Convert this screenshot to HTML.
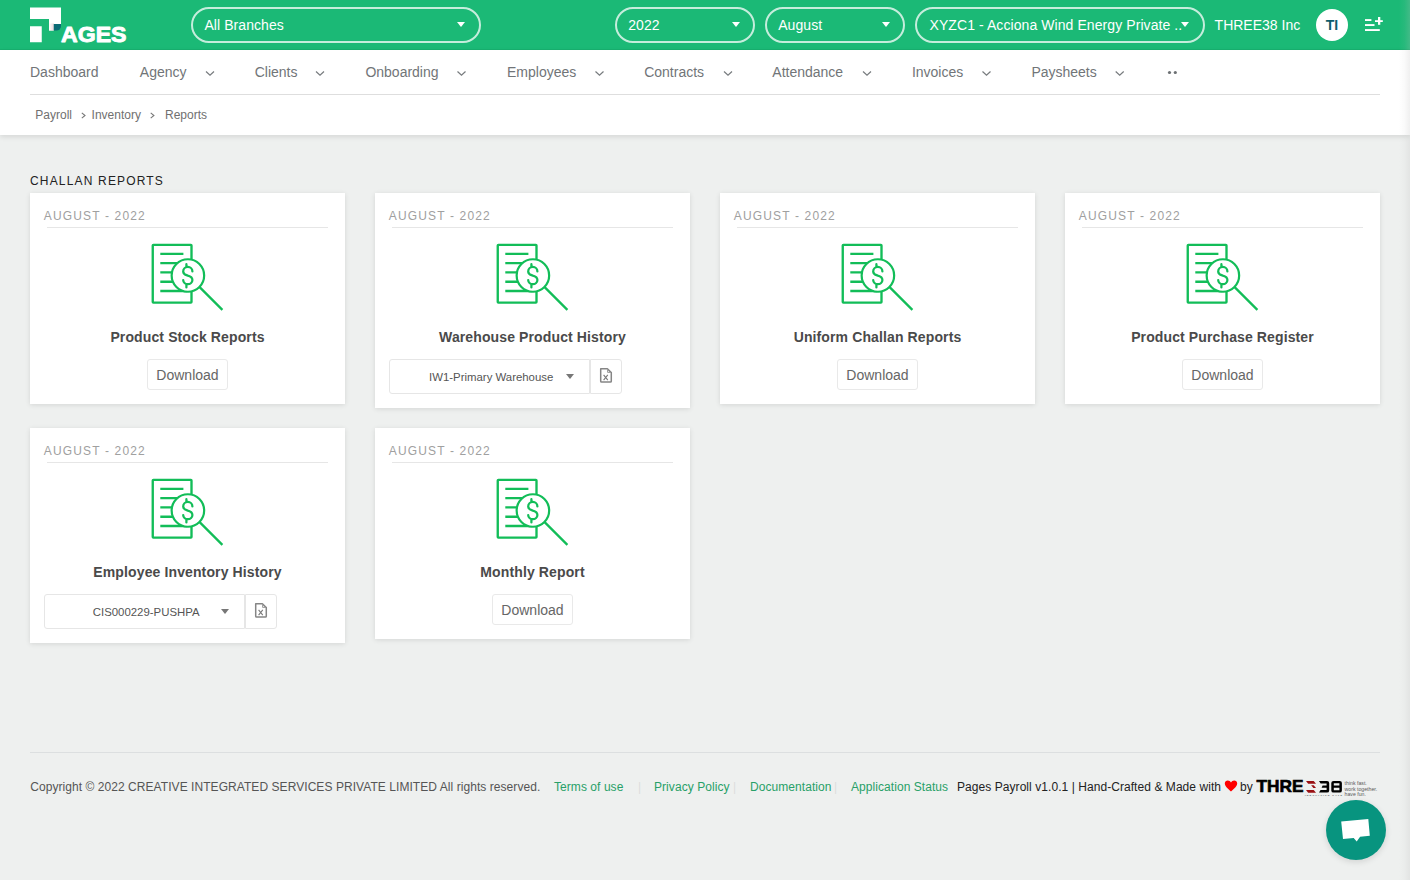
<!DOCTYPE html>
<html><head><meta charset="utf-8">
<style>
*{box-sizing:border-box;margin:0;padding:0}
html,body{width:1410px;height:880px;overflow:hidden}
body{background:#eef0ef;font-family:"Liberation Sans",sans-serif;position:relative}
.abs{position:absolute;white-space:nowrap}
#hdr{position:absolute;left:0;top:0;width:1410px;height:50px;background:#1bb976;border-bottom:1px solid #18b06f}
.pill{position:absolute;top:7.3px;height:35.4px;border:2px solid rgba(255,255,255,.75);border-radius:18px}
.pill span{position:absolute;left:11.2px;top:9px;font-size:14px;line-height:14px;color:#fff;white-space:nowrap;letter-spacing:.08px}
.caret{position:absolute;width:0;height:0;border-left:4px solid transparent;border-right:4px solid transparent;border-top:5px solid #fff}
#panel{position:absolute;left:0;top:50px;width:1410px;height:85px;background:#fff;box-shadow:0 2px 5px rgba(0,0,0,.1)}
.nav{position:absolute;top:65.15px;font-size:14px;line-height:14px;color:#717578;white-space:nowrap}
.chev{position:absolute;top:70px}
.bc{position:absolute;top:109.4px;font-size:12px;line-height:12px;color:#707070;white-space:nowrap}
.card{position:absolute;width:315px;background:#fff;box-shadow:0 1px 5px rgba(0,0,0,.11)}
.card .date{position:absolute;left:13.8px;top:17px;font-size:12px;line-height:12px;letter-spacing:1.15px;color:#a0a0a0;white-space:nowrap}
.card .div{position:absolute;left:17px;right:17px;top:34.3px;height:1px;background:#e6e6e6}
.card .ico{position:absolute;left:120px;top:48px;width:80px;height:70px}
.card .ttl{position:absolute;left:0;width:315px;text-align:center;top:136.9px;font-size:14px;line-height:14px;font-weight:bold;color:#4a4a4a;white-space:nowrap;letter-spacing:.12px}
.btn{position:absolute;top:166px;left:117px;width:81px;height:31px;border:1px solid #e9e9e9;border-radius:3px;background:#fff}
.btn span{position:absolute;left:0;width:79px;text-align:center;top:7.9px;font-size:14px;line-height:14px;color:#666}
.sel{position:absolute;top:166.1px;left:14.2px;width:200.6px;height:34.9px;border:1px solid #e6e6e6;border-radius:3px 0 0 3px}
.sel span{position:absolute;left:2px;width:198px;text-align:center;top:12px;font-size:11.4px;line-height:11.4px;color:#555;white-space:nowrap}
.sel .caret{border-top-color:#777;left:176px;top:14px}
.xl{position:absolute;top:166.1px;left:215px;width:31.7px;height:34.9px;border:1px solid #e6e6e6;border-radius:0 3px 3px 0}
.foot{position:absolute;top:780.84px;font-size:12px;line-height:12px;white-space:nowrap;letter-spacing:.06px}
</style></head>
<body>
<div id="hdr">
  <svg class="abs" style="left:0;top:0" width="140" height="50" viewBox="0 0 140 50">
    <path d="M30 7.5H61V24H53.75V30.5H49V19H30Z" fill="#fff"/>
    <linearGradient id="fg" x1="0" y1="0" x2="1" y2="0"><stop offset="0" stop-color="#fff"/><stop offset="1" stop-color="#e9d6d9"/></linearGradient>
    <rect x="49" y="23.5" width="5" height="7" fill="url(#fg)"/>
    <path d="M53.75 24H61V26A4.5 4.5 0 0 1 56.5 30.5H53.75Z" fill="#0b6a74"/>
    <rect x="30" y="26.25" width="11.75" height="16" fill="#fff"/>
    <text x="61" y="42.1" font-family="Liberation Sans" font-weight="bold" font-size="21.6" fill="#fff" stroke="#fff" stroke-width="0.9" stroke-linejoin="round" textLength="65.5" lengthAdjust="spacingAndGlyphs">AGES</text>
  </svg>
  <div class="pill" style="left:191.2px;width:290.3px"><span>All Branches</span><div class="caret" style="left:264px;top:13px"></div></div>
  <div class="pill" style="left:615px;width:140px"><span>2022</span><div class="caret" style="left:114.5px;top:13px"></div></div>
  <div class="pill" style="left:765px;width:140px"><span>August</span><div class="caret" style="left:114.5px;top:13px"></div></div>
  <div class="pill" style="left:915px;width:290px"><span style="left:12.5px">XYZC1 - Acciona Wind Energy Private ..</span><div class="caret" style="left:263.5px;top:13px"></div></div>
  <div class="abs" style="left:1214.6px;top:18.15px;font-size:14px;line-height:14px;color:#fff">THREE38 Inc</div>
  <div class="abs" style="left:1316px;top:9px;width:32px;height:32px;border-radius:50%;background:#fff"></div>
  <div class="abs" style="left:1316px;top:18.15px;width:32px;text-align:center;font-size:14px;line-height:14px;font-weight:bold;color:#0e5c6c">TI</div>
  <svg class="abs" style="left:1360px;top:14px" width="26" height="20" viewBox="1360 14 26 20">
    <rect x="1365" y="19.1" width="6.4" height="1.9" fill="#fff"/>
    <rect x="1365" y="24.1" width="9.5" height="1.9" fill="#fff"/>
    <rect x="1365" y="29.1" width="14.8" height="1.9" fill="#fff"/>
    <rect x="1375" y="20.2" width="7.8" height="1.8" fill="#fff"/>
    <rect x="1378" y="17" width="2.3" height="7.8" fill="#fff"/>
  </svg>
</div>

<div id="panel"></div>
<div class="nav" style="left:30px">Dashboard</div>
<div class="nav" style="left:139.8px">Agency</div>
<div class="nav" style="left:254.7px">Clients</div>
<div class="nav" style="left:365.4px">Onboarding</div>
<div class="nav" style="left:507px">Employees</div>
<div class="nav" style="left:644.2px">Contracts</div>
<div class="nav" style="left:772.3px">Attendance</div>
<div class="nav" style="left:911.9px">Invoices</div>
<div class="nav" style="left:1031.4px">Paysheets</div>
<svg class="abs" style="left:0;top:60px" width="1410" height="24" viewBox="0 60 1410 24">
  <g fill="none" stroke="#777b7e" stroke-width="1.2">
    <path d="M206 71.5L210 75.2L214 71.5"/>
    <path d="M316 71.5L320 75.2L324 71.5"/>
    <path d="M457.5 71.5L461.5 75.2L465.5 71.5"/>
    <path d="M595.5 71.5L599.5 75.2L603.5 71.5"/>
    <path d="M724 71.5L728 75.2L732 71.5"/>
    <path d="M863 71.5L867 75.2L871 71.5"/>
    <path d="M982.5 71.5L986.5 75.2L990.5 71.5"/>
    <path d="M1115.7 71.5L1119.7 75.2L1123.7 71.5"/>
  </g>
  <circle cx="1169.5" cy="72.5" r="1.6" fill="#6c7073"/>
  <circle cx="1175.3" cy="72.5" r="1.6" fill="#6c7073"/>
</svg>
<div class="abs" style="left:30px;top:94px;width:1350px;height:1px;background:#dedede"></div>
<div class="bc" style="left:35.3px">Payroll</div>
<div class="bc" style="left:91.6px">Inventory</div>
<div class="bc" style="left:165px">Reports</div>
<svg class="abs" style="left:0;top:105px" width="220" height="20" viewBox="0 105 220 20">
  <g fill="none" stroke="#777" stroke-width="1.1">
    <path d="M81.8 112.9L85 115.5L81.8 118.1"/>
    <path d="M150.7 112.9L153.9 115.5L150.7 118.1"/>
  </g>
</svg>

<div class="abs" style="left:30px;top:174.9px;font-size:12px;line-height:12px;letter-spacing:1.17px;color:#222">CHALLAN REPORTS</div>

<svg width="0" height="0" style="position:absolute">
  <defs>
    <g id="rep">
      <rect x="2.75" y="3.85" width="38.75" height="57.85" rx="0.6" fill="none" stroke="#12bd58" stroke-width="2.35" stroke-linejoin="round"/>
      <path d="M10.3 12.8H33.4M10.3 22.1H37M10.3 31.4H37M10.3 40.7H37M10.3 50H37" stroke="#12bd58" stroke-width="2.35"/>
      <circle cx="37.9" cy="34.5" r="16.25" fill="#fff" stroke="#12bd58" stroke-width="2.2"/>
      <path d="M49.6 46.1L72.4 68.9" stroke="#12bd58" stroke-width="2.3"/>
      <path d="M42.4 30.4A4.6 4.5 0 0 0 33.2 30.4C33.2 33.5 36 34 37.8 34.6C40 35.2 42.4 36.2 42.4 39A4.6 4.2 0 0 1 33.2 39M36.4 23.2V25.9M36.4 43.1V46.4" fill="none" stroke="#12bd58" stroke-width="2.25" stroke-linecap="round"/>
    </g>
    <g id="xls">
      <path d="M10.7 9.7H17.4L21.3 13.6V22.2Q21.3 23.1 20.4 23.1H11.6Q10.7 23.1 10.7 22.2Z" fill="none" stroke="#858585" stroke-width="1.5" stroke-linejoin="round"/>
      <path d="M17.6 10V13.4H21" fill="none" stroke="#9a9a9a" stroke-width="1"/>
      <path d="M13.6 15.9L17.8 21.1M17.8 15.9L13.6 21.1" fill="none" stroke="#7a7a7a" stroke-width="1.1"/>
    </g>
  </defs>
</svg>

<!-- Row 1 -->
<div class="card" style="left:30px;top:193px;height:211px">
  <div class="date">AUGUST - 2022</div><div class="div"></div>
  <svg class="ico" viewBox="0 0 80 70"><use href="#rep" transform="translate(-0 0)"/></svg>
  <div class="ttl">Product Stock Reports</div>
  <div class="btn"><span>Download</span></div>
</div>
<div class="card" style="left:375px;top:193px;height:215px">
  <div class="date">AUGUST - 2022</div><div class="div"></div>
  <svg class="ico" viewBox="0 0 80 70"><use href="#rep"/></svg>
  <div class="ttl">Warehouse Product History</div>
  <div class="sel"><span>IW1-Primary Warehouse</span><div class="caret"></div></div>
  <div class="xl"><svg style="position:absolute;left:-1px;top:-1px" width="31.7" height="34.9" viewBox="0 0 31.7 34.9"><use href="#xls"/></svg></div>
</div>
<div class="card" style="left:720px;top:193px;height:211px">
  <div class="date">AUGUST - 2022</div><div class="div"></div>
  <svg class="ico" viewBox="0 0 80 70"><use href="#rep"/></svg>
  <div class="ttl">Uniform Challan Reports</div>
  <div class="btn"><span>Download</span></div>
</div>
<div class="card" style="left:1065px;top:193px;height:211px">
  <div class="date">AUGUST - 2022</div><div class="div"></div>
  <svg class="ico" viewBox="0 0 80 70"><use href="#rep"/></svg>
  <div class="ttl">Product Purchase Register</div>
  <div class="btn"><span>Download</span></div>
</div>
<!-- Row 2 -->
<div class="card" style="left:30px;top:428px;height:215px">
  <div class="date">AUGUST - 2022</div><div class="div"></div>
  <svg class="ico" viewBox="0 0 80 70"><use href="#rep"/></svg>
  <div class="ttl">Employee Inventory History</div>
  <div class="sel"><span>CIS000229-PUSHPA</span><div class="caret"></div></div>
  <div class="xl"><svg style="position:absolute;left:-1px;top:-1px" width="31.7" height="34.9" viewBox="0 0 31.7 34.9"><use href="#xls"/></svg></div>
</div>
<div class="card" style="left:375px;top:428px;height:211px">
  <div class="date">AUGUST - 2022</div><div class="div"></div>
  <svg class="ico" viewBox="0 0 80 70"><use href="#rep"/></svg>
  <div class="ttl">Monthly Report</div>
  <div class="btn"><span>Download</span></div>
</div>

<!-- Footer -->
<div class="abs" style="left:30px;top:752px;width:1350px;height:1px;background:#dcdfe0"></div>
<div class="foot" style="left:30.2px;color:#555">Copyright © 2022 CREATIVE INTEGRATED SERVICES PRIVATE LIMITED All rights reserved.</div>
<div class="foot" style="left:554px;color:#28a068">Terms of use</div>
<div class="foot" style="left:638px;color:#ddd">|</div>
<div class="foot" style="left:654px;color:#28a068">Privacy Policy</div>
<div class="foot" style="left:733px;color:#ddd">|</div>
<div class="foot" style="left:750px;color:#28a068">Documentation</div>
<div class="foot" style="left:834px;color:#ddd">|</div>
<div class="foot" style="left:851px;color:#28a068">Application Status</div>
<div class="foot" style="left:957px;color:#222">Pages Payroll v1.0.1 | Hand-Crafted &amp; Made with</div>
<svg class="abs" style="left:1224px;top:780px" width="14" height="12" viewBox="0 0 14 12"><path d="M7 11.5C6 10.5 0.8 7 0.8 3.6C0.8 1.8 2.2 0.5 3.8 0.5C5.2 0.5 6.4 1.4 7 2.6C7.6 1.4 8.8 0.5 10.2 0.5C11.8 0.5 13.2 1.8 13.2 3.6C13.2 7 8 10.5 7 11.5Z" fill="#f00"/></svg>
<div class="foot" style="left:1240px;color:#222">by</div>
<svg class="abs" style="left:1250px;top:774px" width="135" height="26" viewBox="1250 774 135 26">
  <text x="1256.5" y="792.3" font-family="Liberation Sans" font-weight="bold" font-size="16.3" fill="#000" stroke="#000" stroke-width="0.6" textLength="47" lengthAdjust="spacingAndGlyphs">THRE</text>
  <g fill="#990f12">
    <path d="M1306 780.9H1313.7L1316 783.7H1308.2Z"/>
    <path d="M1311.1 785.3H1313.7L1316 787.9H1313.4Z"/>
    <path d="M1306 790H1313.7L1316 792.8H1308.2Z"/>
  </g>
  <path d="M1319 780.9H1327Q1329.2 780.9 1329.2 783.1V790.4Q1329.2 792.6 1327 792.6H1319L1320.6 790.1H1326.6V787.8H1321.6L1322.6 785.6H1326.6V783.4H1320.6Z" fill="#000"/>
  <path d="M1333.5 780.9H1339.7Q1341.9 780.9 1341.9 783.1V790.4Q1341.9 792.6 1339.7 792.6H1333.5Q1331.3 792.6 1331.3 790.4V783.1Q1331.3 780.9 1333.5 780.9ZM1333.8 783.3V785.5H1339.4V783.3ZM1333.8 787.7V790.2H1339.4V787.7Z" fill="#000" fill-rule="evenodd"/>
  <text x="1305" y="796" font-family="Liberation Sans" font-weight="bold" font-size="2.2" fill="#444" textLength="37" lengthAdjust="spacing">INNOVATION CAFE</text>
  <g font-family="Liberation Sans" font-size="5.2" fill="#5a5a5a">
    <text x="1344.6" y="785.4">think fast.</text>
    <text x="1344.6" y="790.6">work together.</text>
    <text x="1344.6" y="795.8">have fun.</text>
  </g>
</svg>
<div class="abs" style="left:1326px;top:800px;width:60px;height:60px;border-radius:50%;background:#08947f;box-shadow:0 2px 6px rgba(0,0,0,.12)"></div>
<svg class="abs" style="left:1326px;top:800px" width="60" height="60" viewBox="0 0 60 60">
  <path d="M15.2 21.6L42.3 18.9L43.8 35.7L34.1 36.8L30.7 41.6L27.7 37.9L17 39Z" fill="#fff"/>
</svg>
<div class="abs" style="left:1399px;top:0;width:11px;height:880px;background:linear-gradient(90deg,rgba(190,190,190,0),rgba(190,190,190,.08) 50%,rgba(190,190,190,.24))"></div>
</body></html>
